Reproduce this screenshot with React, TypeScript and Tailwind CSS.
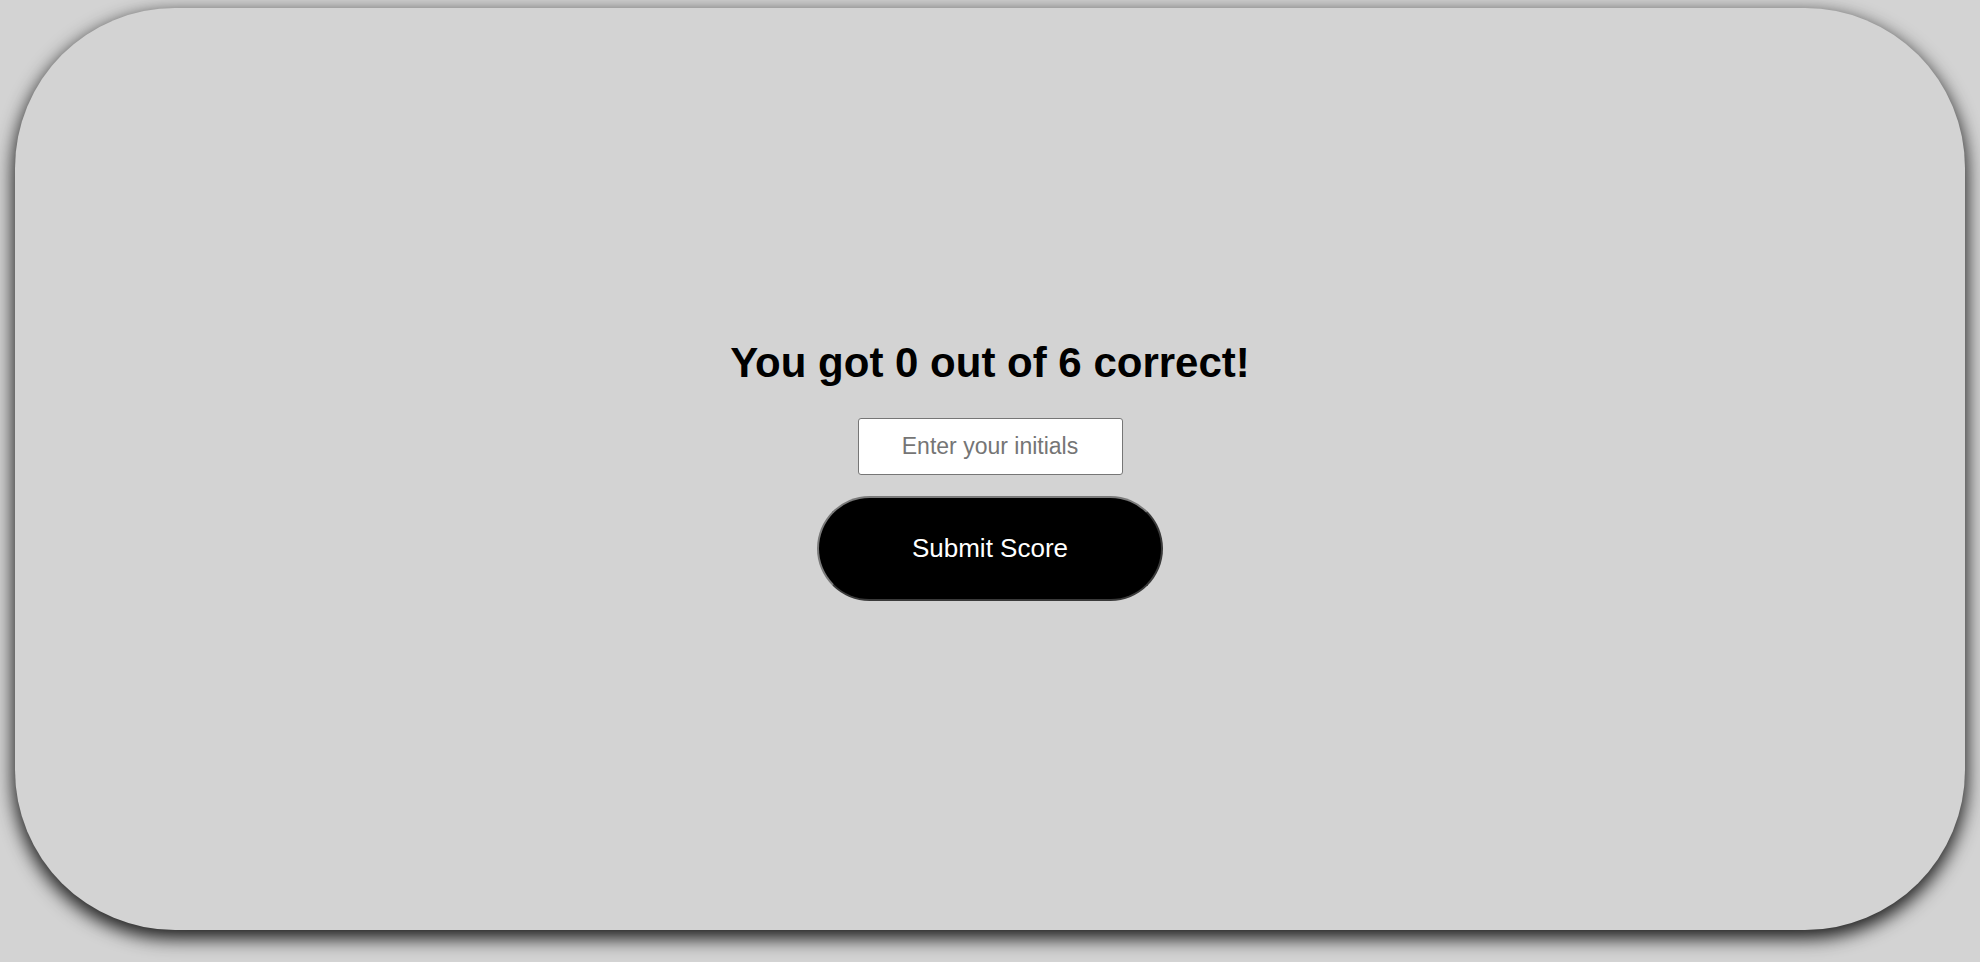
import React from 'react';

const App: React.FC = () => {
  return (
    <div className="min-h-[962px] w-full bg-[#d3d3d3] pt-[8px] px-[15px] font-['Liberation_Sans',Arial,sans-serif]">
      {/* score card */}
      <div className="h-[922px] w-full rounded-[160px] bg-[#d3d3d3] shadow-[0_7px_18px_2px_rgba(0,0,0,0.85)] pt-[4px] flex flex-col items-center justify-center">
        <h1 className="text-[42px] font-bold text-black leading-none mb-[34px]">You got 0 out of 6 correct!</h1>
        <input
          type="text"
          placeholder="Enter your initials"
          className="w-[265px] h-[57px] bg-white border border-[#767676] rounded-[3px] text-center text-[23px] text-black placeholder:text-[#757575] outline-none"
        />
        <button
          type="button"
          className="mt-[21px] w-[346px] h-[105px] rounded-full bg-black text-white text-[26px] border-2 border-t-[#7a7a7a] border-l-[#7a7a7a] border-r-[#3a3a3a] border-b-[#3a3a3a]"
        >
          Submit Score
        </button>
      </div>
    </div>
  );
};

export default App;
